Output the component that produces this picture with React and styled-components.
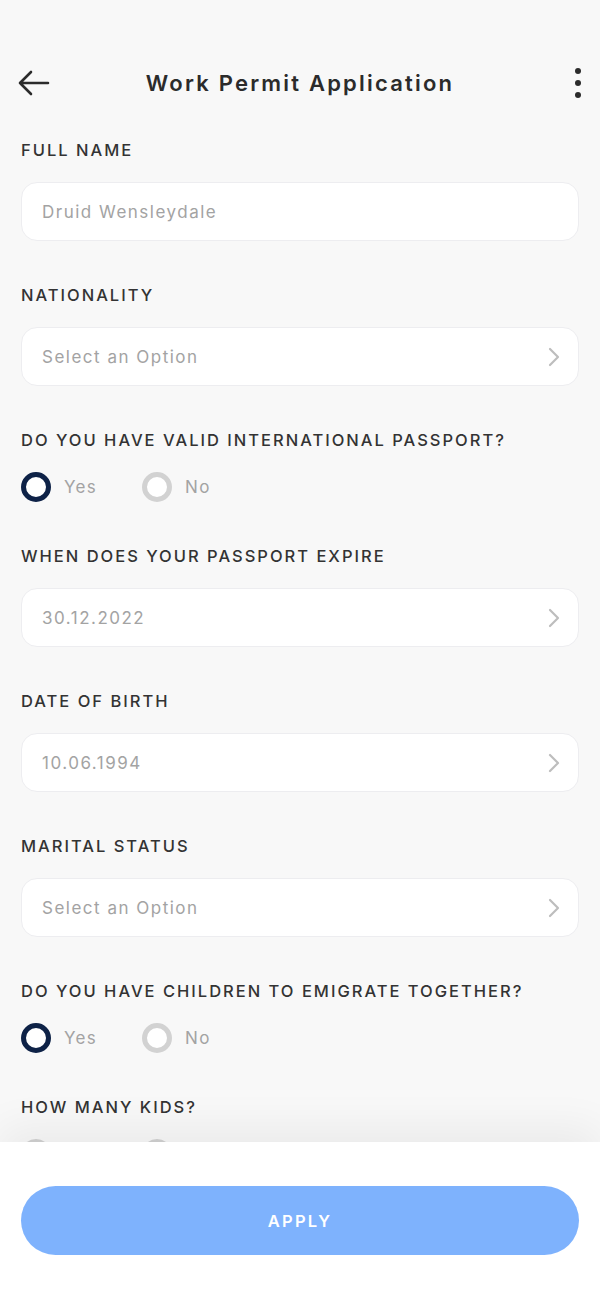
import React from "react";
import styled, { createGlobalStyle } from "styled-components";

const GlobalStyle = createGlobalStyle`
    * { box-sizing: border-box; }
    html, body { margin: 0; padding: 0; }
    body {
        font-family: Inter, Roboto, "Liberation Sans", sans-serif;
        background: #f8f8f8;
    }
`;

const Screen = styled.div`
    width: 600px;
    height: 1299px;
    display: flex;
    flex-direction: column;
    background: #f8f8f8;
    overflow: hidden;
`;

const Header = styled.div`
    height: 50px;
    margin-top: 58px;
    padding: 0 18px;
    display: flex;
    align-items: center;
    justify-content: space-between;
`;

const IconButton = styled.button`
    width: 32px;
    height: 32px;
    padding: 0;
    border: none;
    background: none;
    display: flex;
    align-items: center;
    justify-content: ${props => props.align || "center"};
`;

const Title = styled.h1`
    margin: 0;
    font-size: 22px;
    font-weight: 600;
    letter-spacing: 2.2px;
    color: #2b2b2b;
`;

const Form = styled.div`
    flex: 1;
    overflow: hidden;
    padding: 32px 21px 0;
    display: flex;
    flex-direction: column;
    gap: 44px;
`;

const Field = styled.div`
    display: flex;
    flex-direction: column;
    gap: 22px;
`;

const Label = styled.div`
    height: 20px;
    line-height: 20px;
    font-size: 16.5px;
    font-weight: 500;
    letter-spacing: 2px;
    color: #333;
    text-transform: uppercase;
`;

const Input = styled.div`
    height: 59px;
    padding: 0 18px 0 20px;
    display: flex;
    align-items: center;
    justify-content: space-between;
    background: #fff;
    border: 1px solid #ededf0;
    border-radius: 16px;
    font-size: 17px;
    letter-spacing: 1.5px;
    color: #a3a3a3;
`;

const RadioRow = styled.div`
    display: flex;
    align-items: center;
    gap: 45px;
`;

const RadioOption = styled.label`
    display: flex;
    align-items: center;
    gap: 13px;
    font-size: 17px;
    letter-spacing: 1.3px;
    color: #a3a3a3;
`;

const RadioCircle = styled.span`
    width: 30px;
    height: 30px;
    border-radius: 50%;
    border: 5.5px solid ${props => (props.checked ? "#0e2247" : "#d2d2d2")};
    background: #fff;
`;

const Footer = styled.div`
    position: relative;
    z-index: 1;
    height: 157px;
    flex-shrink: 0;
    padding: 44px 21px 0;
    background: #fff;
    box-shadow: 0 -14px 40px rgba(0, 0, 0, 0.06);
`;

const ApplyButton = styled.button`
    width: 100%;
    height: 69px;
    border: none;
    border-radius: 35px;
    background: #7eb2fd;
    color: #fff;
    font-family: inherit;
    font-size: 16.5px;
    font-weight: 600;
    letter-spacing: 2.2px;
`;

const BackArrow = () => (
    <svg width="32" height="28" viewBox="0 0 32 28" fill="none" stroke="#2b2b2b" strokeWidth="2.6" strokeLinecap="round" strokeLinejoin="round">
        <path d="M30 14H2M13 3L2 14l11 11" />
    </svg>
);

const Kebab = () => (
    <svg width="8" height="32" viewBox="0 0 8 32" fill="#2b2b2b">
        <circle cx="4" cy="4" r="3" />
        <circle cx="4" cy="16" r="3" />
        <circle cx="4" cy="28" r="3" />
    </svg>
);

const Chevron = () => (
    <svg width="12" height="20" viewBox="0 0 12 20" fill="none" stroke="#bdbdbd" strokeWidth="2.2" strokeLinecap="round" strokeLinejoin="round">
        <path d="M2 2l8 8-8 8" />
    </svg>
);

const TextField = ({ label, value }) => (
    <Field>
        <Label>{label}</Label>
        <Input>{value}</Input>
    </Field>
);

const SelectField = ({ label, value }) => (
    <Field>
        <Label>{label}</Label>
        <Input>
            {value}
            <Chevron />
        </Input>
    </Field>
);

const RadioField = ({ label, value }) => (
    <Field>
        <Label>{label}</Label>
        <RadioRow>
            <RadioOption>
                <RadioCircle checked={value === "yes"} />
                Yes
            </RadioOption>
            <RadioOption>
                <RadioCircle checked={value === "no"} />
                No
            </RadioOption>
        </RadioRow>
    </Field>
);

const App = () => (
    <>
        <GlobalStyle />
        <Screen>
            <Header>
                <IconButton align="flex-start"><BackArrow /></IconButton>
                <Title>Work Permit Application</Title>
                <IconButton align="flex-end"><Kebab /></IconButton>
            </Header>
            <Form>
                <TextField label="Full Name" value="Druid Wensleydale" />
                <SelectField label="Nationality" value="Select an Option" />
                <RadioField label="Do you have valid international passport?" value="yes" />
                <SelectField label="When does your passport expire" value="30.12.2022" />
                <SelectField label="Date of birth" value="10.06.1994" />
                <SelectField label="Marital status" value="Select an Option" />
                <RadioField label="Do you have children to emigrate together?" value="yes" />
                <RadioField label="How many kids?" value="" />
            </Form>
            <Footer>
                <ApplyButton>APPLY</ApplyButton>
            </Footer>
        </Screen>
    </>
);

export default App;
